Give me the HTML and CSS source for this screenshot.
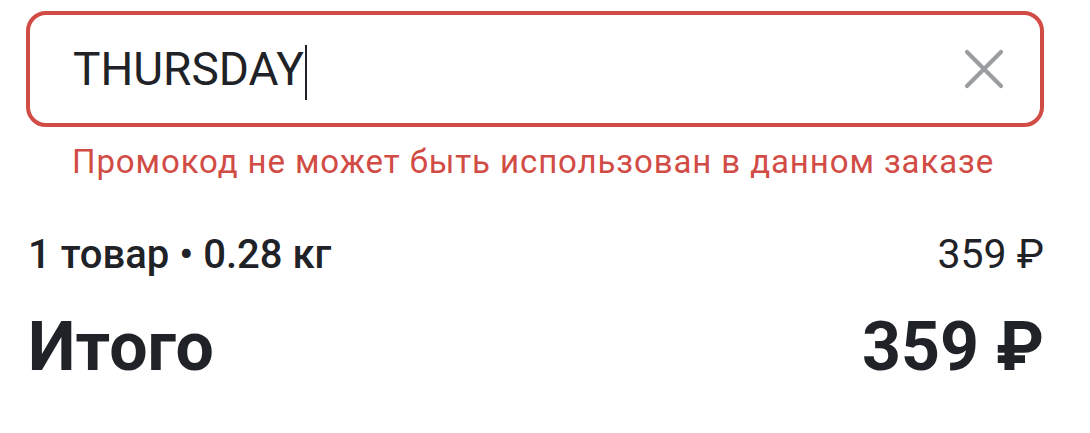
FILE: index.html
```html
<!DOCTYPE html>
<html lang="ru">
<head>
<meta charset="utf-8">
<link rel="stylesheet" href="styles.css">
</head>
<body>
<div class="page">
  <div class="promo">
    <div class="promo-field">
      <span class="promo-value">THURSDAY</span><span class="caret"></span>
    </div>
    <svg class="clear" viewBox="0 0 40 40" width="40" height="40">
      <path d="M3 3 L37 37 M37 3 L3 37" stroke="#9a9ea2" stroke-width="4.2" stroke-linecap="round" fill="none"/>
    </svg>
  </div>
  <div class="error">Промокод не может быть использован в данном заказе</div>
  <div class="row small">
    <span class="items">1 товар • 0.28 кг</span>
    <span class="price">359 ₽</span>
  </div>
  <div class="row total">
    <span>Итого</span>
    <span>359 ₽</span>
  </div>
</div>
</body>
</html>
```
FILE: styles.css
```css
html, body {
  margin: 0;
  padding: 0;
  background: #ffffff;
}
body {
  font-family: Roboto, "Noto Sans", sans-serif;
  color: #1f2226;
}
.page {
  padding: 11px 46px 0 26px;
}
.promo {
  box-sizing: border-box;
  height: 116px;
  border: 4px solid #d24c46;
  border-radius: 20px;
  display: flex;
  align-items: center;
  justify-content: space-between;
  padding: 0 36px 0 43px;
}
.promo-field {
  display: flex;
  align-items: center;
}
.promo-value {
  font-size: 46px;
  font-weight: 400;
  line-height: 1;
}
.caret {
  display: inline-block;
  width: 2px;
  height: 55px;
  background: #1f2226;
  margin-left: 1px;
  margin-top: 6px;
}
.clear {
  display: block;
}
.error {
  color: #d24c46;
  font-size: 33px;
  letter-spacing: 0.9px;
  line-height: 40px;
  padding-left: 46px;
  margin-top: 15px;
}
.row {
  display: flex;
  justify-content: space-between;
  align-items: baseline;
}
.small {
  font-size: 40px;
  line-height: 48px;
  margin-top: 48px;
  padding-left: 2px;
}
.small .items {
  font-weight: 500;
}
.small .price {
  font-weight: 400;
  font-size: 41px;
}
.total {
  font-size: 68px;
  font-weight: 700;
  line-height: 80px;
  margin-top: 28px;
  padding-left: 2px;
}
```
